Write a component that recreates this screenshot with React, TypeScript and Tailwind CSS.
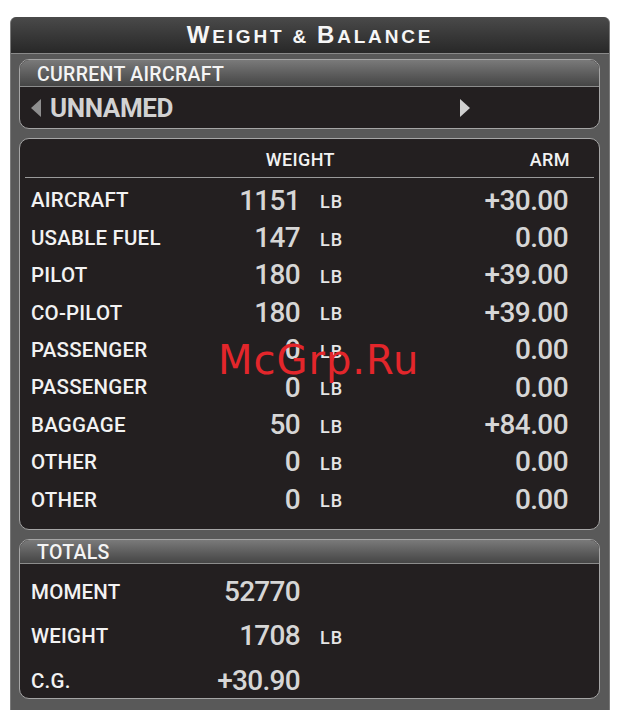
import React from 'react';

const ui = "font-['Roboto','Liberation_Sans',sans-serif]";

const rows = [
    { label: 'AIRCRAFT', weight: '1151', arm: '+30.00' },
    { label: 'USABLE FUEL', weight: '147', arm: '0.00' },
    { label: 'PILOT', weight: '180', arm: '+39.00' },
    { label: 'CO-PILOT', weight: '180', arm: '+39.00' },
    { label: 'PASSENGER', weight: '0', arm: '0.00' },
    { label: 'PASSENGER', weight: '0', arm: '0.00' },
    { label: 'BAGGAGE', weight: '50', arm: '+84.00' },
    { label: 'OTHER', weight: '0', arm: '0.00' },
    { label: 'OTHER', weight: '0', arm: '0.00' },
];

const totals = [
    { label: 'MOMENT', value: '52770', unit: false },
    { label: 'WEIGHT', value: '1708', unit: true },
    { label: 'C.G.', value: '+30.90', unit: false },
];

function BoxHeader({ children }: { children: React.ReactNode }) {
    return (
        <div className="h-[27px] flex items-center pl-[17px] pt-[3px] bg-gradient-to-b from-[#7a7a7a] to-[#454545] border-b border-[#8c8c8c] rounded-t-[9px]">
            <span className={`${ui} font-medium text-[19.5px] leading-none text-[#f4f4f4] tracking-[0.3px]`}>{children}</span>
        </div>
    );
}

function Label({ children }: { children: React.ReactNode }) {
    return (
        <span className={`${ui} font-medium text-[20.5px] leading-none text-[#f2f2f2] w-[169px] tracking-[0.2px]`}>{children}</span>
    );
}

function Value({ children }: { children: React.ReactNode }) {
    return (
        <span className={`${ui} font-medium text-[28px] leading-none text-[#d6d6d6] w-[100px] text-right tracking-[-0.7px]`}>{children}</span>
    );
}

function Unit() {
    return (
        <span className={`${ui} font-medium text-[18px] leading-none text-[#e6e6e6] ml-[20px] mt-[3px] tracking-[1px]`}>LB</span>
    );
}

export default function App() {
    return (
        <div className="w-[619px] h-[719px] bg-white pt-[17px] pl-[10px] relative">
            <div className="w-[600px] h-[693px] bg-[#595959] rounded-t-[6px] flex flex-col border-x border-[#7a7a7a]">
                {/* Title */}
                <div className="h-[37px] flex items-center justify-center bg-gradient-to-b from-[#4a4a4a] to-[#282828] rounded-t-[6px] border-b border-[#8a8a8a]">
                    <span className="font-['Liberation_Sans',sans-serif] font-bold text-[#f6f6f6] leading-none tracking-[2.8px]">
                        <span className="text-[24px]">W</span>
                        <span className="text-[19px]">EIGHT &amp; </span>
                        <span className="text-[24px]">B</span>
                        <span className="text-[19px]">ALANCE</span>
                    </span>
                </div>

                <div className="flex flex-col gap-[9px] pt-[5px] pl-[8px] pr-[9px]">
                    {/* Current aircraft */}
                    <div className="h-[70px] rounded-[10px] border border-[#a5a5a5] bg-[#231f20] flex flex-col">
                        <BoxHeader>CURRENT AIRCRAFT</BoxHeader>
                        <div className="flex-1 flex items-center pl-[11px]">
                            <div className="w-[429px] flex items-center">
                                <svg width="10" height="18" viewBox="0 0 10 18" className="mr-[9px]">
                                    <polygon points="10,0 10,18 0,9" fill="#8e8e8e" />
                                </svg>
                                <span className={`${ui} font-bold text-[26px] leading-none text-[#d2d2d2] tracking-[-0.4px]`}>UNNAMED</span>
                            </div>
                            <svg width="10" height="18" viewBox="0 0 10 18">
                                <polygon points="0,0 0,18 10,9" fill="#d0d0d0" />
                            </svg>
                        </div>
                    </div>

                    {/* Weights */}
                    <div className="h-[392px] rounded-[10px] border border-[#a5a5a5] bg-[#231f20] flex flex-col">
                        <div className="h-[39px] flex items-end pb-[8px] mx-[5px] border-b border-[#9a9a9a]">
                            <span className={`${ui} font-medium text-[18px] leading-none text-[#f2f2f2] w-[310px] text-right tracking-[0.4px]`}>WEIGHT</span>
                            <span className={`${ui} font-medium text-[18px] leading-none text-[#f2f2f2] flex-1 text-right pr-[24px] tracking-[0.4px]`}>ARM</span>
                        </div>
                        <div className="pt-[4px] flex flex-col">
                            {rows.map((r, i) => (
                                <div key={i} className="h-[37.4px] flex items-center pl-[11px] pr-[31px]">
                                    <Label>{r.label}</Label>
                                    <Value>{r.weight}</Value>
                                    <Unit />
                                    <span className={`${ui} font-medium text-[28px] leading-none text-[#d6d6d6] flex-1 text-right tracking-[-0.6px]`}>{r.arm}</span>
                                </div>
                            ))}
                        </div>
                    </div>

                    {/* Totals */}
                    <div className="h-[160px] rounded-[10px] border border-[#a5a5a5] bg-[#231f20] flex flex-col">
                        <BoxHeader>TOTALS</BoxHeader>
                        <div className="pt-[6px] flex flex-col">
                            {totals.map((t, i) => (
                                <div key={i} className="h-[44.5px] shrink-0 flex items-center pl-[11px]">
                                    <Label>{t.label}</Label>
                                    <Value>{t.value}</Value>
                                    {t.unit && <Unit />}
                                </div>
                            ))}
                        </div>
                    </div>
                </div>
            </div>

            {/* watermark */}
            <div className="absolute left-[218px] top-[340px] font-['DejaVu_Sans',sans-serif] text-[40px] leading-[40px] tracking-[1px] text-[#e3262b] pointer-events-none">
                McGrp.Ru
            </div>
        </div>
    );
}
